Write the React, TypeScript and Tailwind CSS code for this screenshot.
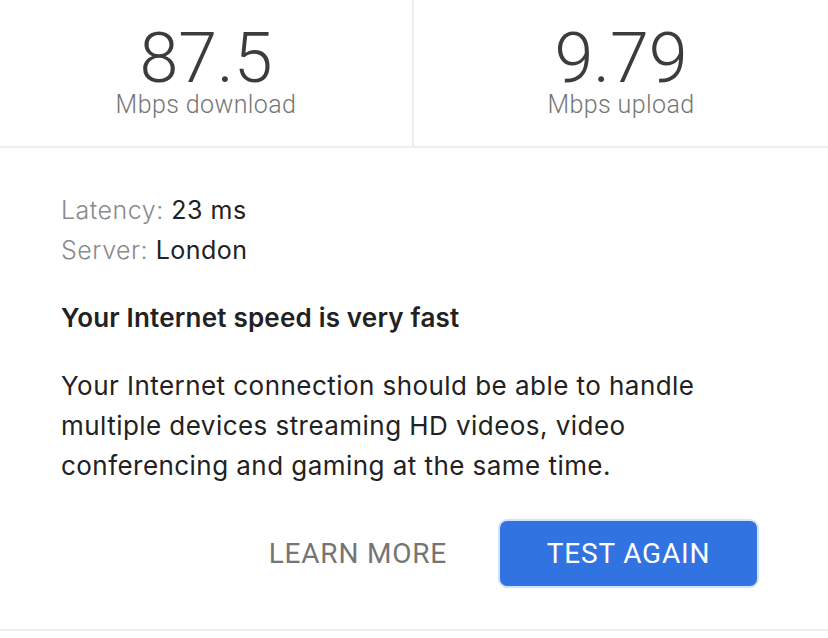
export default function App() {
  return (
    <div className="w-[828px] h-[638px] bg-white font-['Inter','Noto_Sans',sans-serif] text-[#202124] overflow-hidden">
      <div className="grid grid-cols-2 h-[148px] border-b-2 border-[#eeeeee]">
        <div className="flex flex-col items-center pt-[26px] border-r-2 border-[#eeeeee]">
          <div className="font-['Roboto',sans-serif] font-light text-[70px] leading-[64px] text-[#3c3c3c]">87.5</div>
          <div className="font-['Roboto',sans-serif] font-light text-[25px] tracking-[0.4px] leading-[28px] text-[#757575] mt-[1px]">Mbps download</div>
        </div>
        <div className="flex flex-col items-center pt-[26px]">
          <div className="font-['Roboto',sans-serif] font-light text-[70px] leading-[64px] text-[#3c3c3c]">9.79</div>
          <div className="font-['Roboto',sans-serif] font-light text-[25px] tracking-[0.4px] leading-[28px] text-[#757575] mt-[1px]">Mbps upload</div>
        </div>
      </div>

      <div className="pl-[61px] pr-[60px] pt-[42px]">
        <div className="text-[25px] tracking-[0.5px] leading-[40px]">
          <div>
            <span className="font-light text-[#8a8a8a]">Latency: </span>
            <span className="text-[#222222]">23 ms</span>
          </div>
          <div>
            <span className="font-light text-[#8a8a8a]">Server: </span>
            <span className="text-[#222222]">London</span>
          </div>
        </div>

        <div className="mt-[30px] text-[26px] tracking-[0.2px] leading-[36px] font-semibold text-[#222222]">
          Your Internet speed is very fast
        </div>

        <p className="mt-[30px] text-[26px] tracking-[0.45px] leading-[40px] text-[#222222] w-[680px]">
          Your Internet connection should be able to handle multiple devices streaming HD videos, video conferencing and gaming at the same time.
        </p>

        <div className="flex justify-end items-center gap-[51px] mt-[33px] pr-[9px]">
          <button className="text-[28px] tracking-[0.8px] text-[#757575] font-['Roboto',sans-serif]">
            LEARN MORE
          </button>
          <button className="w-[261px] h-[69px] rounded-[9px] bg-[#3173e0] border-2 border-[#d2e2fa] text-white text-[28px] tracking-[0.8px] font-['Roboto',sans-serif]">
            TEST AGAIN
          </button>
        </div>
      </div>

      <div className="mt-[41px] border-b-2 border-[#eeeeee]"></div>
    </div>
  )
}
